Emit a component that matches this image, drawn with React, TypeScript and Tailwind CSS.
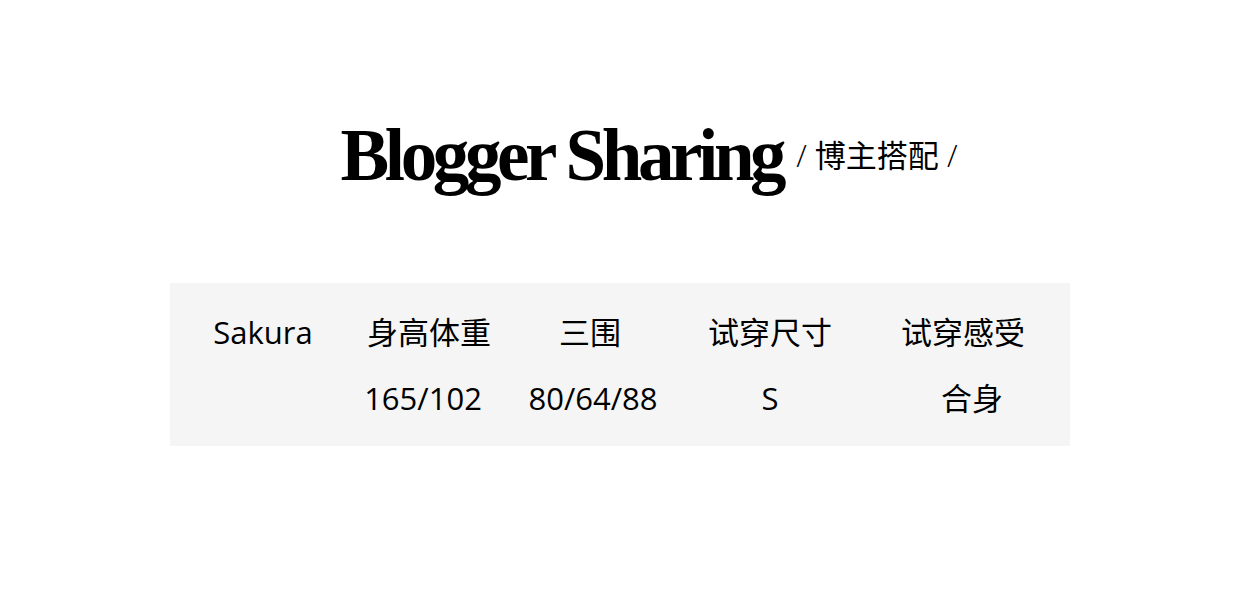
const sans = "font-['Open_Sans','Noto_Sans_CJK_SC',sans-serif]"

const head = ['Sakura', '身高体重', '三围', '试穿尺寸', '试穿感受']
const vals = ['', '165/102', '80/64/88', 'S', '合身']
const cols = ['w-[186px]', 'w-[146px]', 'w-[176px]', 'w-[184px]', 'w-[202px]']
const valShift = ['', 'pr-[12px]', 'pl-[6px]', '', 'pl-[18px]']

export default function App() {
  return (
    <div className="h-[598px] w-[1240px] bg-white text-black">
      <div className="flex items-start justify-center pl-[58px] pt-[119px]">
        <h1 className="font-['Liberation_Serif',serif] text-[73px] font-bold leading-none tracking-[-4.4px]">
          Blogger Sharing
        </h1>
        <span className={`${sans} ml-[14px] mt-[21px] text-[31px] leading-none`}>
          <span className="font-light">/</span> 博主搭配 <span className="font-light">/</span>
        </span>
      </div>

      <div className={`${sans} mx-[170px] mt-[91px] h-[163px] bg-[#f5f5f5] pt-[34px] text-[31px] leading-none`}>
        <div className="flex">
          {head.map((h, i) => (
            <div key={h} className={`${cols[i]} text-center`}>{h}</div>
          ))}
        </div>
        <div className="mt-[35px] flex">
          {vals.map((v, i) => (
            <div key={i} className={`${cols[i]} ${valShift[i]} text-center`}>{v}</div>
          ))}
        </div>
      </div>
    </div>
  )
}
